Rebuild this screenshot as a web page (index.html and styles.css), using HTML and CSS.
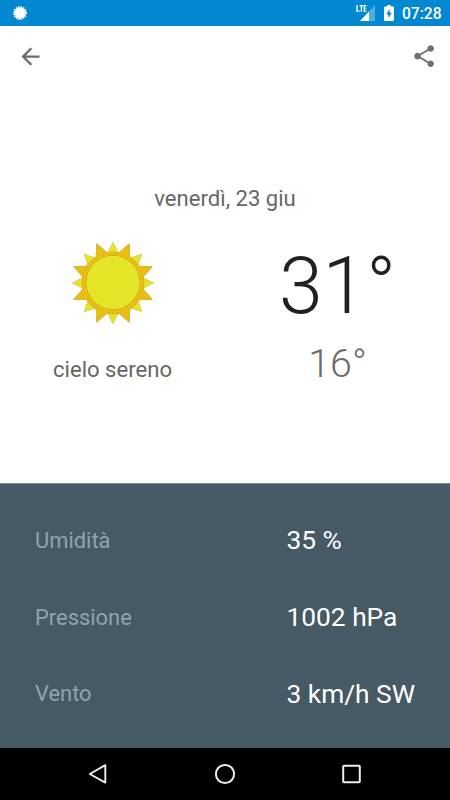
FILE: index.html
```html
<!DOCTYPE html>
<html lang="it">
<head>
<meta charset="utf-8">
<title>Meteo</title>
<link rel="stylesheet" href="styles.css">
</head>
<body>
<div class="screen">
  <header class="status">
    <svg class="notif" width="16" height="16" viewBox="-8 -8 16 16"><circle r="5.8" fill="#fff"/><circle r="6.2" fill="none" stroke="#fff" stroke-width="1.6" stroke-dasharray="1.45 .98"/></svg>
    <svg class="signal" width="20" height="18" viewBox="0 0 20 18">
      <path d="M19 1V17H4Z" fill="#fff" opacity=".32"/><path d="M13 7.5V17H4Z" fill="#fff"/>
      <path d="M1 1V7.2H3.6M3.6 1.6H7.2M5.4 1.6V7.8M10.4 1.6H8.2V7.2H10.4M8.2 4.4H10.2" fill="none" stroke="#fff" stroke-width="1.3"/>
    </svg>
    <svg class="battery" width="10" height="16" viewBox="0 0 10 16"><path fill="#fff" fill-rule="evenodd" d="M3 0H7V1.6H9Q10 1.6 10 2.6V15Q10 16 9 16H1Q0 16 0 15V2.6Q0 1.6 1 1.6H3ZM5.7 4 2.3 9.5H4.4V13.3L7.8 7.8H5.7Z"/></svg>
    <span class="clock">07:28</span>
  </header>
  <nav class="toolbar">
    <svg width="27" height="27" viewBox="0 0 24 24"><path fill="#6b6b6b" d="M20 11H7.83l5.59-5.59L12 4l-8 8 8 8 1.41-1.41L7.83 13H20v-2z"/></svg>
    <svg width="26.25" height="26.25" viewBox="0 0 24 24"><path fill="#6f6f6f" d="M18 16.08c-.76 0-1.44.3-1.96.77L8.91 12.7c.05-.23.09-.46.09-.7s-.04-.47-.09-.7l7.05-4.11c.54.5 1.25.81 2.04.81 1.66 0 3-1.34 3-3s-1.34-3-3-3-3 1.34-3 3c0 .24.04.47.09.7L8.04 9.81C7.5 9.31 6.79 9 6 9c-1.66 0-3 1.34-3 3s1.34 3 3 3c.79 0 1.5-.31 2.04-.81l7.12 4.16c-.05.21-.08.43-.08.65 0 1.61 1.31 2.92 2.92 2.92s2.92-1.31 2.92-2.92-1.31-2.92-2.92-2.92z"/></svg>
  </nav>
  <main class="today">
    <p class="date">venerdì, 23 giu</p>
    <div class="summary">
      <div class="condition">
        <svg class="sun" width="96" height="96" viewBox="-48 -48 96 96">
          <defs>
            <path id="y" d="M0-41 6-29H-6Z"/><path id="o" d="M0-43 6.3-30H-6.3Z"/>
            <g id="y2"><use href="#y"/><use href="#y" transform="rotate(45)"/></g>
            <g id="o2"><use href="#o" transform="rotate(22.5)"/><use href="#o" transform="rotate(67.5)"/></g>
          </defs>
          <g class="ray-light"><use href="#y2"/><use href="#y2" transform="rotate(90)"/><use href="#y2" transform="rotate(180)"/><use href="#y2" transform="rotate(270)"/></g>
          <g class="ray-dark"><circle r="31.2"/><use href="#o2"/><use href="#o2" transform="rotate(90)"/><use href="#o2" transform="rotate(180)"/><use href="#o2" transform="rotate(270)"/></g>
          <circle class="disc" r="27" cy="-.5"/>
        </svg>
        <p class="desc">cielo sereno</p>
      </div>
      <div class="temps">
        <p class="high">31°</p>
        <p class="low">16°</p>
      </div>
    </div>
  </main>
  <section class="details">
    <div class="row"><span class="label">Umidità</span><span class="value">35 %</span></div>
    <div class="row"><span class="label">Pressione</span><span class="value">1002 hPa</span></div>
    <div class="row"><span class="label">Vento</span><span class="value">3 km/h SW</span></div>
  </section>
  <footer class="navbar">
    <svg width="22" height="24" viewBox="0 0 22 24"><path d="M18.3 3.2V20.6L2.8 12Z" fill="none" stroke="#eee" stroke-width="1.9" stroke-linejoin="round"/></svg>
    <svg width="22" height="24" viewBox="0 0 22 24"><circle cx="11" cy="12" r="9.1" fill="none" stroke="#eee" stroke-width="2"/></svg>
    <svg width="22" height="24" viewBox="0 0 22 24"><rect x="3.2" y="3.7" width="16.6" height="16.6" rx=".8" fill="none" stroke="#eee" stroke-width="2"/></svg>
  </footer>
</div>
</body>
</html>
```
FILE: styles.css
```css
* { box-sizing: border-box; }
body { margin: 0; font-family: Roboto, sans-serif; background: #fff; }
p { margin: 0; }
svg { display: block; flex: none; }
.screen { width: 450px; height: 800px; display: flex; flex-direction: column; overflow: hidden; }
.status { height: 26px; background: #0288d1; display: flex; align-items: center; padding: 0 9px 0 12px; color: #fff; }
.signal { margin-left: auto; margin-right: 8px; }
.battery { margin-right: 8px; }
.clock { font-size: 15.6px; font-weight: 500; line-height: 26px; width: 39px; white-space: nowrap; padding-top: 1px; }
.toolbar { height: 61px; display: flex; align-items: center; justify-content: space-between; padding: 0 13px 0 17px; }
.today { height: 396px; padding-top: 98px; }
.date { text-align: center; font-size: 22.1px; line-height: 26px; color: #666; }
.summary { display: grid; grid-template-columns: 1fr 1fr; }
.condition { padding-top: 24px; display: flex; flex-direction: column; align-items: center; }
.desc { margin-top: 25px; font-size: 22.1px; line-height: 26px; color: #666; }
.temps { text-align: center; font-weight: 300; padding-top: 29px; }
.high { font-size: 78.8px; line-height: 92px; color: #212121; }
.low { font-size: 39.4px; line-height: 46px; margin-top: 9px; color: #6c6c6c; }
.ray-light { fill: #e6e426; filter: drop-shadow(0 .6px .6px rgba(0,0,0,.5)); }
.ray-dark { fill: #e8bd16; filter: drop-shadow(0 .6px .6px rgba(0,0,0,.5)); }
.disc { fill: #e5e527; filter: drop-shadow(0 .8px .7px rgba(70,50,0,.85)); }
.details { height: 265px; background: #455a64; border-top: 1px solid #7b8b91; padding: 18px 35px 16px; display: flex; flex-direction: column; }
.row { flex: 1; display: grid; grid-template-columns: 251.5px 1fr; align-items: center; white-space: nowrap; }
.label { font-size: 21.9px; color: #90a4ae; }
.value { font-size: 26.3px; color: #fff; }
.navbar { flex: 1; background: #000; display: flex; justify-content: space-between; align-items: center; padding: 0 88px 0 87px; }
```
